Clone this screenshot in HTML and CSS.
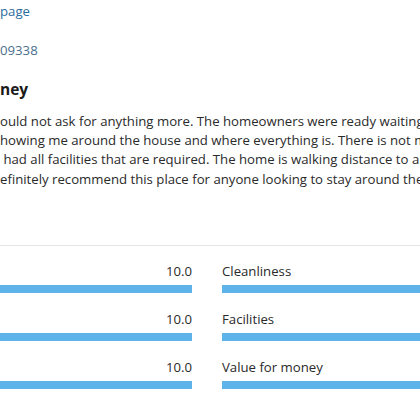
FILE: index.html
```html
<!DOCTYPE html>
<html lang="en">
<head>
  <meta charset="UTF-8">
  <meta name="viewport" content="width=device-width, initial-scale=1.0">
  <title>Guest review</title>
  <link rel="stylesheet" href="styles.css">
</head>
<body>
  <div class="review">
    <a class="meta-link" href="#">page</a>
    <a class="meta-id" href="#">09338</a>
    <h3 class="review-title">ney</h3>
    <p class="review-text">
      <span class="line">ould not ask for anything more. The homeowners were ready waiting for</span>
      <span class="line">howing me around the house and where everything is. There is not much</span>
      <span class="line">&nbsp;had all facilities that are required. The home is walking distance to all</span>
      <span class="line">efinitely recommend this place for anyone looking to stay around the area.</span>
    </p>
  </div>

  <div class="scores">
    <div class="score-grid">
      <div class="score">
        <div class="score-head"><span>Staff</span><span>10.0</span></div>
        <div class="bar"><div class="fill" style="width:100%"></div></div>
      </div>
      <div class="score">
        <div class="score-head"><span>Cleanliness</span><span>10.0</span></div>
        <div class="bar"><div class="fill" style="width:100%"></div></div>
      </div>
      <div class="score">
        <div class="score-head"><span>Comfort</span><span>10.0</span></div>
        <div class="bar"><div class="fill" style="width:100%"></div></div>
      </div>
      <div class="score">
        <div class="score-head"><span>Facilities</span><span>10.0</span></div>
        <div class="bar"><div class="fill" style="width:100%"></div></div>
      </div>
      <div class="score">
        <div class="score-head"><span>Location</span><span>10.0</span></div>
        <div class="bar"><div class="fill" style="width:100%"></div></div>
      </div>
      <div class="score">
        <div class="score-head"><span>Value for money</span><span>10.0</span></div>
        <div class="bar"><div class="fill" style="width:100%"></div></div>
      </div>
    </div>
  </div>
</body>
</html>
```

FILE: styles.css
```css
html, body { margin:0; padding:0; }
body { font-family:"Open Sans","Noto Sans",Arial,sans-serif; font-size:13.2px; color:#2a2a2a; background:#fff; overflow:hidden; width:420px; height:401px; }

.review { padding-top:2px; }
.meta-link, .meta-id { display:block; line-height:19px; text-decoration:none; }
.meta-link { color:#2c6d9e; }
.meta-id { color:#4b6f8e; margin-top:20px; }
.review-title { margin:19px 0 0; font-size:15.5px; line-height:20px; font-weight:700; color:#1a1a1a; }
.review-text { margin:13px 0 0; line-height:19.2px; }
.line { display:block; white-space:nowrap; }

.scores { margin-top:56px; border-top:1px solid #e4e4e4; padding-top:16px; }
.score-grid { display:grid; grid-template-columns:262px 262px; column-gap:30px; row-gap:17px; margin-left:-70px; }
.score-head { display:flex; justify-content:space-between; line-height:19px; margin-bottom:4px; }
.bar { height:8px; background:#e9e9e9; }
.fill { height:100%; background:#5db3ea; }
```
